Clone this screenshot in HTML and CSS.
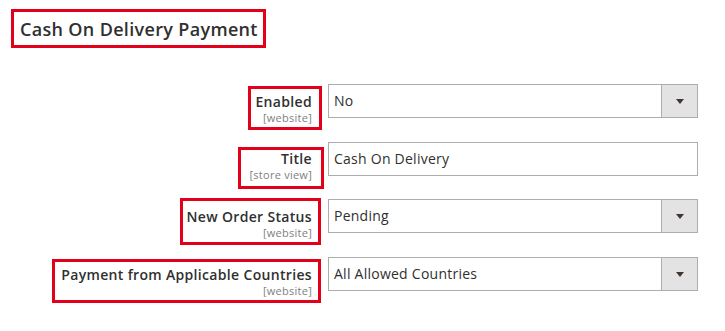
FILE: index.html
```html
<!DOCTYPE html>
<html>
<head>
<meta charset="utf-8">
<link rel="stylesheet" href="styles.css">
</head>
<body>
<div class="page">
  <div class="section-head">
    <h2 class="section-title">Cash On Delivery Payment</h2>
  </div>
  <div class="form">
    <div class="label-cell">
      <div class="label-box lb-enabled">
        <div class="label-name">Enabled</div>
        <div class="label-scope">[website]</div>
      </div>
    </div>
    <div class="control">
      <div class="select"><span class="select-value">No</span><span class="select-btn"><span class="arrow"></span></span></div>
    </div>

    <div class="label-cell">
      <div class="label-box lb-title">
        <div class="label-name">Title</div>
        <div class="label-scope">[store view]</div>
      </div>
    </div>
    <div class="control">
      <div class="input">Cash On Delivery</div>
    </div>

    <div class="label-cell">
      <div class="label-box lb-status">
        <div class="label-name">New Order Status</div>
        <div class="label-scope">[website]</div>
      </div>
    </div>
    <div class="control">
      <div class="select"><span class="select-value">Pending</span><span class="select-btn"><span class="arrow"></span></span></div>
    </div>

    <div class="label-cell">
      <div class="label-box lb-countries">
        <div class="label-name">Payment from Applicable Countries</div>
        <div class="label-scope">[website]</div>
      </div>
    </div>
    <div class="control">
      <div class="select"><span class="select-value">All Allowed Countries</span><span class="select-btn"><span class="arrow"></span></span></div>
    </div>
  </div>
</div>
</body>
</html>
```

FILE: styles.css
```css
* { box-sizing: border-box; }
html, body { margin: 0; padding: 0; background: #fff; }
body {
  font-family: "Open Sans", "DejaVu Sans", sans-serif;
  color: #303030;
  width: 725px;
  height: 331px;
  overflow: hidden;
}
.page {
  display: flex;
  flex-direction: column;
  align-items: flex-start;
}
.section-head {
  margin: 9px 0 0 11px;
  border: 3px solid #e2001a;
  padding: 5px 5px 4px 6px;
}
.section-title {
  margin: 0;
  font-size: 18px;
  line-height: 24px;
  font-weight: 600;
  letter-spacing: 0.33px;
  color: #303030;
  white-space: nowrap;
}
.form {
  margin-top: 36px;
  display: grid;
  grid-template-columns: 322px 370px;
  grid-template-rows: 58px 57px 58px 58px;
  column-gap: 6px;
}
.label-cell {
  display: flex;
  justify-content: flex-end;
  align-items: flex-start;
}
.label-box {
  border: 3px solid #e2001a;
  text-align: right;
  white-space: nowrap;
}
.lb-enabled { margin-top: 2px; padding: 3.5px 7px 2.5px 4px; }
.lb-title { margin-top: 5px; margin-right: -2px; padding: 0 9px 3.5px 9px; }
.lb-status { margin-top: -1px; margin-right: 1px; padding: 7px 6px 2px 4px; }
.lb-countries { margin-top: 2px; margin-right: 1px; padding: 3.5px 6px 2.5px 6px; }
.label-name {
  font-size: 14px;
  line-height: 18px;
  font-weight: 600;
  letter-spacing: 0.33px;
  color: #303030;
}
.label-scope {
  font-size: 11px;
  line-height: 14px;
  letter-spacing: 0.25px;
  color: #808080;
}
.control { display: flex; align-items: flex-start; }
.select, .input {
  width: 370px;
  height: 34px;
  border: 1px solid #adadad;
  background: #fff;
  font-size: 14px;
  line-height: 18px;
  letter-spacing: 0.25px;
  color: #303030;
  display: flex;
  align-items: center;
}
.input { padding-left: 5px; }
.select-value { flex: 1; padding-left: 5px; }
.select-btn {
  width: 36px;
  align-self: stretch;
  background: #e3e3e3;
  border-left: 1px solid #adadad;
  display: flex;
  align-items: center;
  justify-content: center;
}
.arrow {
  width: 0;
  height: 0;
  border-left: 4px solid transparent;
  border-right: 4px solid transparent;
  border-top: 5px solid #41362f;
}
```
